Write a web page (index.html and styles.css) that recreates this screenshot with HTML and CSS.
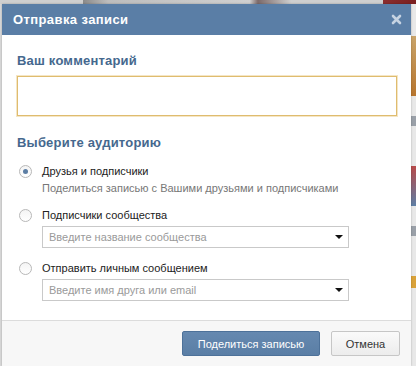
FILE: index.html
```html
<!DOCTYPE html>
<html lang="ru">
<head>
<meta charset="utf-8">
<title>Отправка записи</title>
<link rel="stylesheet" href="styles.css">
</head>
<body>
<div class="page">
  <div class="page-top"></div>
  <div class="page-side">
    <div class="side-photo"></div>
    <div class="side-line"></div>
    <div class="side-photo2"></div>
    <div class="side-line"></div>
    <div class="side-orange"></div>
  </div>
</div>

<div class="modal">
  <div class="modal-header">
    <span class="modal-title">Отправка записи</span>
    <svg class="modal-close" width="11" height="11" viewBox="0 0 11 11"><path d="M2 2 L9 9 M9 2 L2 9" stroke="#c6d3e2" stroke-width="2.6" stroke-linecap="round"/></svg>
  </div>
  <div class="modal-body">
    <div class="section-title">Ваш комментарий</div>
    <div class="comment-box"></div>
    <div class="section-title audience-title">Выберите аудиторию</div>

    <div class="option">
      <span class="radio radio-on"></span>
      <span class="option-label">Друзья и подписчики</span>
    </div>
    <div class="option-hint">Поделиться записью с Вашими друзьями и подписчиками</div>

    <div class="option">
      <span class="radio"></span>
      <span class="option-label">Подписчики сообщества</span>
    </div>
    <div class="select">
      <span class="placeholder">Введите название сообщества</span>
      <span class="arrow"></span>
    </div>

    <div class="option">
      <span class="radio"></span>
      <span class="option-label">Отправить личным сообщением</span>
    </div>
    <div class="select">
      <span class="placeholder">Введите имя друга или email</span>
      <span class="arrow"></span>
    </div>
  </div>
  <div class="modal-footer">
    <button class="btn btn-primary">Поделиться записью</button>
    <button class="btn btn-secondary">Отмена</button>
  </div>
</div>
</body>
</html>
```

FILE: styles.css
```css
* { box-sizing: border-box; }
html, body { margin: 0; padding: 0; }
body {
  width: 416px;
  height: 366px;
  overflow: hidden;
  background: #d9d9d9;
  font-family: "Liberation Sans", Arial, sans-serif;
  font-size: 11px;
  position: relative;
}
.page { width: 416px; height: 366px; }
.page-top {
  height: 4px;
  background: linear-gradient(90deg, #cfcfcf 0, #cfcfcf 20%, #8a8a8a 20%, #bdbdbd 26%, #d0d0d0 60%, #7c6a6a 62%, #cfcfcf 70%, #cfcfcf 92%, #8b2e2e 92%, #7a1f1f 100%);
}
.page-side {
  position: absolute;
  right: 0;
  top: 4px;
  width: 6px;
  height: 362px;
  background: #e8e8e8;
}
.side-photo { height: 60px; margin-top: 32px; background: linear-gradient(#c9a46a, #b7752e); }
.side-line { height: 10px; margin-top: 20px; background: #9aa0a8; }
.side-photo2 { height: 40px; margin-top: 40px; background: linear-gradient(#b84a4a, #5e7fa6); }
.side-orange { height: 12px; margin-top: 40px; background: #d9a23a; }

.modal {
  position: absolute;
  left: 2px;
  top: 4px;
  width: 409px;
  height: 362px;
  background: #fff;
  display: flex;
  flex-direction: column;
  box-shadow: 0 0 2px rgba(0,0,0,0.25);
}
.modal-header {
  height: 31px;
  background: #5a7ea6;
  display: flex;
  align-items: center;
  justify-content: space-between;
  padding: 0 9px 0 11px;
}
.modal-title {
  color: #fff;
  font-weight: bold;
  font-size: 13px;
  letter-spacing: 0.4px;
}
.modal-close { display: block; }

.modal-body {
  padding: 18px 14px 19px 15px;
}
.section-title {
  font-weight: bold;
  font-size: 13px;
  line-height: 16px;
  color: #45688e;
  letter-spacing: 0.2px;
}
.comment-box {
  margin-top: 7px;
  width: 380px;
  height: 40px;
  border: 1px solid #dfbc6f;
  box-shadow: 0 0 0 1px rgba(236, 206, 140, 0.5);
}
.audience-title { margin-top: 19px; }

.option {
  display: flex;
  align-items: center;
  height: 14px;
  margin-top: 13px;
  line-height: 14px;
  color: #222;
}
.radio {
  width: 13px;
  height: 13px;
  border-radius: 50%;
  border: 1px solid #b8b8b8;
  background: linear-gradient(#f4f4f4, #fff);
  margin-left: 2px;
  margin-right: 10px;
  position: relative;
  flex: none;
}
.radio-on::after {
  content: "";
  position: absolute;
  left: 3px;
  top: 3px;
  width: 5px;
  height: 5px;
  border-radius: 50%;
  background: #5c7ea4;
}
.option-hint {
  margin-top: 3px;
  margin-left: 25px;
  line-height: 14px;
  color: #777;
}
.select {
  margin-top: 4px;
  margin-left: 25px;
  width: 307px;
  height: 22px;
  border: 1px solid #c9c9c9;
  display: flex;
  align-items: center;
  justify-content: space-between;
  padding: 0 5px 0 6px;
}
.placeholder { color: #9a9a9a; }
.arrow {
  width: 0;
  height: 0;
  border-left: 4px solid transparent;
  border-right: 4px solid transparent;
  border-top: 4px solid #111;
}

.modal-footer {
  flex: 1;
  background: #f7f7f7;
  border-top: 1px solid #dcdcdc;
  display: flex;
  justify-content: flex-end;
  align-items: flex-start;
  gap: 11px;
  padding: 10px 11px 0 0;
}
.btn {
  height: 25px;
  font-family: "Liberation Sans", Arial, sans-serif;
  font-size: 11px;
  border-radius: 2px;
  padding: 0;
  cursor: pointer;
}
.btn-primary {
  width: 138px;
  background: linear-gradient(#6689b0, #5a7ea5);
  border: 1px solid #4d7199;
  color: #fff;
}
.btn-secondary {
  width: 69px;
  background: linear-gradient(#fafafa, #ececec);
  border: 1px solid #c6c6c6;
  color: #333;
}
```
